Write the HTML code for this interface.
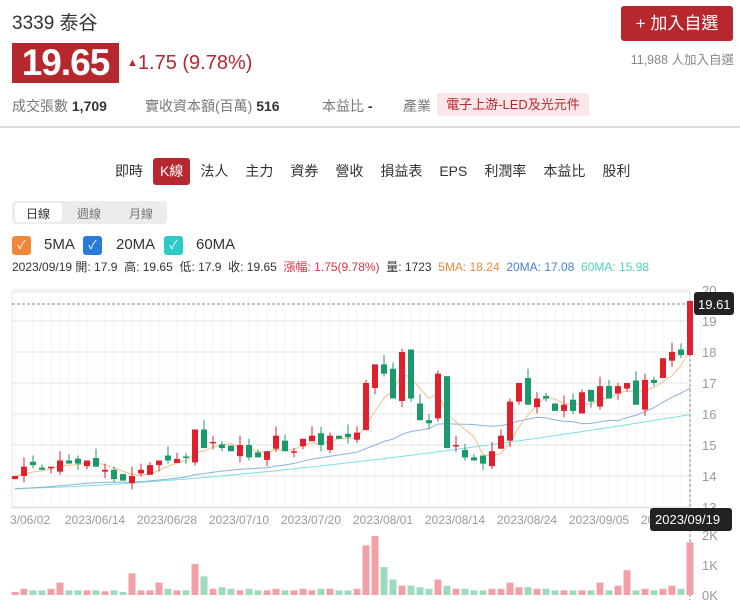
<!DOCTYPE html>
<html><head><meta charset="utf-8">
<style>
*{margin:0;padding:0;box-sizing:border-box}
body{width:740px;height:602px;background:#fff;font-family:"Liberation Sans","Noto Sans CJK TC",sans-serif;position:relative;overflow:hidden;color:#333}
.a{position:absolute;white-space:nowrap}
.tabs span{display:inline-block;padding:0 7px;height:27px;line-height:27px;font-size:14px;color:#333;margin-right:3px}
.tabs span.on{background:#b7282e;color:#fff;border-radius:3px}
.cb{position:absolute;top:236px;width:19px;height:19px;border-radius:3px;color:#fff;font-size:12px;text-align:center;line-height:19px}
</style></head><body>
<div class="a" style="left:12px;top:8px;font-size:19px;color:#333">3339 泰谷</div>
<div class="a" style="left:12px;top:43px;width:107px;height:40px;background:#b7282e;color:#fff;font-size:37px;font-weight:bold;line-height:40px;text-align:center;letter-spacing:-1px">19.65</div>
<div class="a" style="left:127px;top:52px;font-size:20px;color:#b7282e"><span style="font-size:11px;vertical-align:3px">▲</span>1.75 (9.78%)</div>
<div class="a" style="left:621px;top:6px;width:112px;height:35px;background:#b7282e;border-radius:3px;color:#fff;font-size:17px;line-height:35px;text-align:center">+ 加入自選</div>
<div class="a" style="right:6px;top:49px;font-size:12.5px;color:#888">11,988 人加入自選</div>
<div class="a" style="left:12px;top:96px;font-size:14px;color:#777">成交張數 <b style="color:#333">1,709</b></div>
<div class="a" style="left:145px;top:96px;font-size:14px;color:#777">實收資本額(百萬) <b style="color:#333">516</b></div>
<div class="a" style="left:322px;top:96px;font-size:14px;color:#777">本益比 <b style="color:#333">-</b></div>
<div class="a" style="left:403px;top:96px;font-size:14px;color:#777">產業</div>
<div class="a" style="left:437px;top:93px;width:152px;height:23px;background:#fbe7ea;color:#b7282e;font-size:13px;line-height:23px;text-align:center;border-radius:2px">電子上游-LED及光元件</div>
<div class="a" style="left:0;top:126px;width:740px;height:2px;background:#ddd"></div>
<div class="a tabs" style="left:108px;top:158px"><span>即時</span><span class="on">K線</span><span>法人</span><span>主力</span><span>資券</span><span>營收</span><span>損益表</span><span>EPS</span><span>利潤率</span><span>本益比</span><span>股利</span></div>
<div class="a" style="left:12px;top:201px;width:155px;height:23px;background:#ececec;border-radius:4px"></div>
<div class="a" style="left:15px;top:203px;width:47px;height:19px;background:#fff;border-radius:3px"></div>
<div class="a" style="left:26px;top:205px;font-size:12px;color:#333">日線</div>
<div class="a" style="left:77px;top:205px;font-size:12px;color:#777">週線</div>
<div class="a" style="left:129px;top:205px;font-size:12px;color:#777">月線</div>
<div class="cb" style="left:12px;background:#f0883a">✓</div><div class="a" style="left:44px;top:236px;font-size:15px">5MA</div>
<div class="cb" style="left:83px;background:#2a7ad9">✓</div><div class="a" style="left:116px;top:236px;font-size:15px">20MA</div>
<div class="cb" style="left:164px;background:#2ec9c9">✓</div><div class="a" style="left:196px;top:236px;font-size:15px">60MA</div>
<div class="a" style="left:12px;top:258px;font-size:12px;color:#333">2023/09/19 開: 17.9 &nbsp;高: 19.65 &nbsp;低: 17.9 &nbsp;收: 19.65 &nbsp;<span style="color:#e0303e">漲幅: 1.75(9.78%)</span> &nbsp;量: 1723 &nbsp;<span style="color:#f0883a">5MA: 18.24</span> &nbsp;<span style="color:#4a80d0">20MA: 17.08</span> &nbsp;<span style="color:#4fd1c5">60MA: 15.98</span></div>
<svg class="a" style="left:0;top:0" width="740" height="602" id="s"></svg>
<script>
var C=[14.0,14.3,14.35,14.2,14.3,14.5,14.4,14.4,14.5,14.3,14.2,13.9,13.85,14.0,14.2,14.35,14.5,14.5,14.55,14.6,15.5,14.9,15.1,14.9,14.8,15.0,14.6,14.6,14.8,15.3,14.8,14.8,15.2,15.3,15.0,15.3,15.2,15.25,15.4,17.0,17.6,17.3,16.5,18.0,16.5,15.8,15.7,17.3,14.9,15.0,14.6,14.5,14.4,14.8,15.3,16.4,17.0,16.3,16.5,16.5,16.1,16.3,16.1,16.7,16.4,16.9,16.5,16.9,17.0,16.3,17.1,17.0,17.8,18.0,17.9,19.65];
var V=[.1,.2,.15,.15,.2,.4,.15,.15,.15,.15,.12,.15,.1,.7,.15,.15,.4,.2,.15,.15,1.0,.6,.2,.25,.2,.15,.2,.15,.15,.2,.15,.15,.2,.15,.2,.2,.15,.15,.2,1.6,1.9,.9,.5,.3,.3,.25,.2,.5,.3,.2,.2,.15,.15,.2,.2,.4,.25,.25,.2,.2,.15,.15,.15,.15,.15,.4,.15,.3,.8,.15,.2,.15,.2,.3,.2,1.7];
var N=C.length,X=function(i){return 15+i*9.0},Y=function(p){return 290+(20-p)*31};
var h='';
for(var i=0;i<N;i++){h+='<line x1="'+X(i)+'" y1="292" x2="'+X(i)+'" y2="508" stroke="#f4f4f4"/>';}
h+='<rect x="12" y="292" width="678" height="216" fill="none" stroke="#e6e6e6"/>';
for(var p=13;p<=20;p++){h+='<line x1="12" y1="'+Y(p)+'" x2="690" y2="'+Y(p)+'" stroke="#e4e4e4"/><text x="702" y="'+(Y(p)+5)+'" font-size="13" fill="#999">'+p+'</text>';}
h+='<line x1="12" y1="304" x2="690" y2="304" stroke="#888" stroke-dasharray="3,2"/>';
h+='<line x1="690" y1="304" x2="690" y2="600" stroke="#888" stroke-dasharray="3,2"/>';
function ma(n,i){var s=0;for(var k=0;k<n;k++){s+=C[Math.max(0,i-k)];}return s/n;}
var m5='',m20='',m60='';
for(var i=0;i<N;i++){m5+=(i?'L':'M')+X(i)+' '+Y(ma(5,i)).toFixed(1);m20+=(i?'L':'M')+X(i)+' '+Y(ma(20,i)*0.97+0.4*(i/N)).toFixed(1);m60+=(i?'L':'M')+X(i)+' '+Y(13.6+2.38*Math.pow(i/(N-1),1.5)).toFixed(1);}
h+='<path d="'+m60+'" stroke="#7fe0e0" fill="none"/><path d="'+m20+'" stroke="#8db2e0" fill="none"/><path d="'+m5+'" stroke="#f3c08a" fill="none"/>';
for(var i=0;i<N;i++){var o=i?C[i-1]+((i*7)%5-2)*0.08:13.9;var c=C[i];if(i==N-1)o=17.9;var up=c>=o;var col=up?'#e0202e':'#1a9a6a';var hi=Math.max(o,c)+((i*3)%4)*0.1,lo=Math.min(o,c)-((i*5)%3)*0.1;if(i==N-1){hi=19.65;lo=17.9;}
var t=Y(Math.max(o,c)),b=Y(Math.min(o,c));if(b-t<1.5)b=t+1.5;
h+='<line x1="'+X(i)+'" y1="'+Y(hi)+'" x2="'+X(i)+'" y2="'+Y(lo)+'" stroke="'+col+'"/><rect x="'+(X(i)-3)+'" y="'+t+'" width="6" height="'+(b-t)+'" fill="'+col+'"/>';
h+='<rect x="'+(X(i)-3.5)+'" y="'+(595-V[i]*31)+'" width="7" height="'+(V[i]*31)+'" fill="'+(up?'#f2a0a6':'#9ed9c0')+'"/>';}
var d=['3/06/02','2023/06/14','2023/06/28','2023/07/10','2023/07/20','2023/08/01','2023/08/14','2023/08/24','2023/09/05','20'];
for(var k=0;k<d.length;k++){h+='<text x="'+(k==0?10:(65+(k-1)*72))+'" y="524" font-size="12" fill="#999">'+d[k]+'</text>';}
h+='<text x="702" y="540" font-size="13" fill="#999">2K</text><text x="702" y="570" font-size="13" fill="#999">1K</text><text x="702" y="600" font-size="13" fill="#999">0K</text>';
h+='<rect x="694" y="292" width="40" height="23" rx="3" fill="#222"/><text x="698" y="309" font-size="13" fill="#fff">19.61</text>';
h+='<rect x="650" y="508" width="82" height="23" rx="3" fill="#222"/><text x="655" y="524" font-size="13" fill="#fff">2023/09/19</text>';
document.getElementById('s').innerHTML=h;
</script>
</body></html>
